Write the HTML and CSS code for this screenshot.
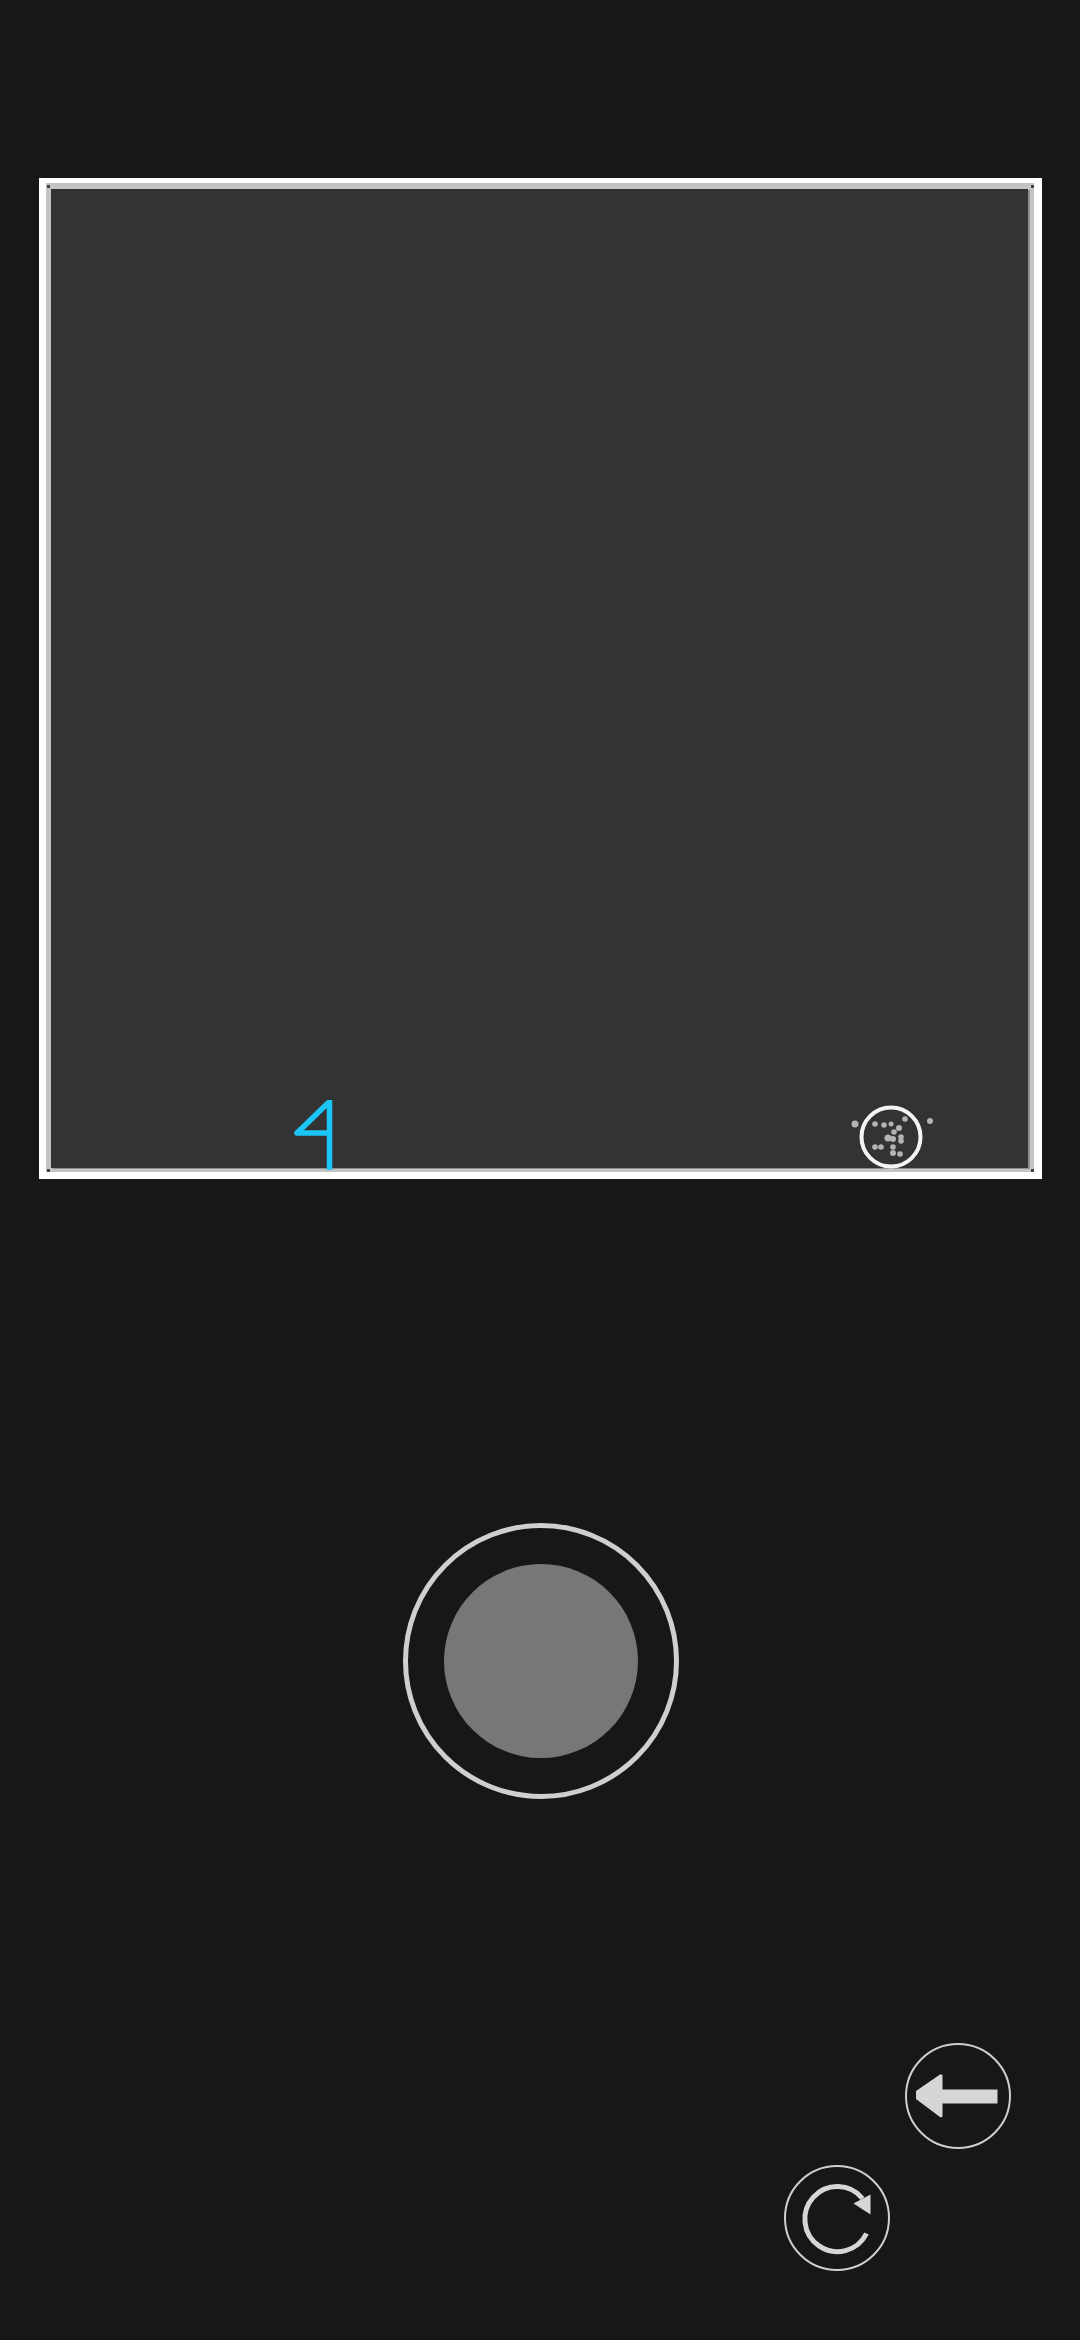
FILE: index.html
```html
<!DOCTYPE html>
<html lang="en">
<head>
<meta charset="utf-8">
<title>Game</title>
<link rel="stylesheet" href="styles.css">
</head>
<body>
<main class="screen">
  <section class="board">
    <div class="bevel">
      <div class="panel">
        <svg class="marks" viewBox="51 189 977 979" aria-hidden="true">
          <path class="four" d="M329 1102 L297 1133 H330 M329.500 1100 V1170"/>
          <circle class="ring" cx="891" cy="1137" r="29.500"/>
          <g class="specks">
            <circle cx="855" cy="1124" r="3.500"/>
            <circle cx="875" cy="1124" r="2.800"/>
            <circle cx="884" cy="1125" r="2.800"/>
            <circle cx="891" cy="1124" r="2.500"/>
            <circle cx="905" cy="1119" r="2.800"/>
            <circle cx="930" cy="1121" r="3"/>
            <circle cx="899" cy="1128" r="3"/>
            <circle cx="894" cy="1132" r="2.800"/>
            <circle cx="888" cy="1138" r="3.500"/>
            <circle cx="893" cy="1139" r="3"/>
            <circle cx="901" cy="1137" r="2.800"/>
            <circle cx="901" cy="1141" r="2.800"/>
            <circle cx="875" cy="1147" r="2.800"/>
            <circle cx="881" cy="1147" r="2.800"/>
            <circle cx="893" cy="1147" r="2.800"/>
            <circle cx="893" cy="1153" r="3"/>
            <circle cx="900" cy="1154" r="2.800"/>
          </g>
        </svg>
      </div>
    </div>
    <span class="pin pin-tl"></span>
    <span class="pin pin-tr"></span>
    <span class="pin pin-bl"></span>
    <span class="pin pin-br"></span>
  </section>

  <div class="shutter"><div class="shutter-core"></div></div>

  <div class="controls">
    <button class="round back" type="button" aria-label="Back">
      <svg viewBox="0 0 101 101" aria-hidden="true">
        <path class="solid" d="M9 45 L33 28.500 Q35.500 27.500 35.500 30 V43.500 H90.500 V57.500 H35.500 V70 Q35.500 72 33 71 L9 53 Z"/>
      </svg>
    </button>
    <button class="round redo" type="button" aria-label="Restart">
      <svg viewBox="0 0 101 101" aria-hidden="true">
        <path class="arc" d="M80.500 65.500 A32.500 32.500 0 1 1 76.500 30.500"/>
        <path class="solid" d="M67.500 35.500 L84.500 26.500 V46.500 Z"/>
      </svg>
    </button>
  </div>
</main>
</body>
</html>
```
FILE: styles.css
```css
* {
  box-sizing: border-box;
}

html,
body {
  margin: 0;
  padding: 0;
  background: #171717;
}

.screen {
  width: 1080px;
  height: 2340px;
  padding-top: 178px;
  background: #171717;
  overflow: hidden;
}

.board {
  position: relative;
  width: 1003px;
  height: 1001px;
  margin-left: 39px;
  padding: 5px 8px 7px 7px;
  background: #fff;
}

.bevel {
  height: 100%;
  padding: 6px 6px 4px 5px;
  background: #c4c4c4;
}

.panel {
  position: relative;
  height: 100%;
  background: #333;
  box-shadow: 2px 1px 0 #8f8f8f;
}

.marks {
  position: absolute;
  inset: 0;
  width: 100%;
  height: 100%;
  overflow: visible;
}

.four {
  fill: none;
  stroke: #1bc6f7;
  stroke-width: 5.500;
  stroke-linejoin: round;
}

.ring {
  fill: none;
  stroke: #f4f4f4;
  stroke-width: 4;
}

.specks {
  filter: blur(0.6px);
}

.specks circle {
  fill: #b4b4b4;
}

.pin {
  position: absolute;
  width: 3px;
  height: 3px;
  background: #444;
}

.pin-tl {
  left: 8px;
  top: 7px;
}

.pin-tr {
  right: 8px;
  top: 7px;
}

.pin-bl {
  left: 8px;
  bottom: 7px;
}

.pin-br {
  right: 8px;
  bottom: 7px;
}

.shutter {
  display: flex;
  align-items: center;
  justify-content: center;
  width: 276px;
  height: 276px;
  margin: 344px 0 0 403px;
  border: 5px solid #cfcfcf;
  border-radius: 50%;
}

.shutter-core {
  width: 194px;
  height: 194px;
  border-radius: 50%;
  background: #777;
}

.controls {
  display: flex;
  flex-direction: column;
  align-items: flex-end;
  gap: 16px;
  margin-top: 244px;
}

.round {
  display: block;
  width: 106px;
  height: 106px;
  padding: 0;
  border: 2.500px solid #cfcfcf;
  border-radius: 50%;
  background: none;
}

.round svg {
  display: block;
  width: 101px;
  height: 101px;
}

.back {
  margin-right: 69px;
}

.redo {
  margin-right: 190px;
}

.solid {
  fill: #d6d6d6;
}

.arc {
  fill: none;
  stroke: #d6d6d6;
  stroke-width: 5;
}
```
